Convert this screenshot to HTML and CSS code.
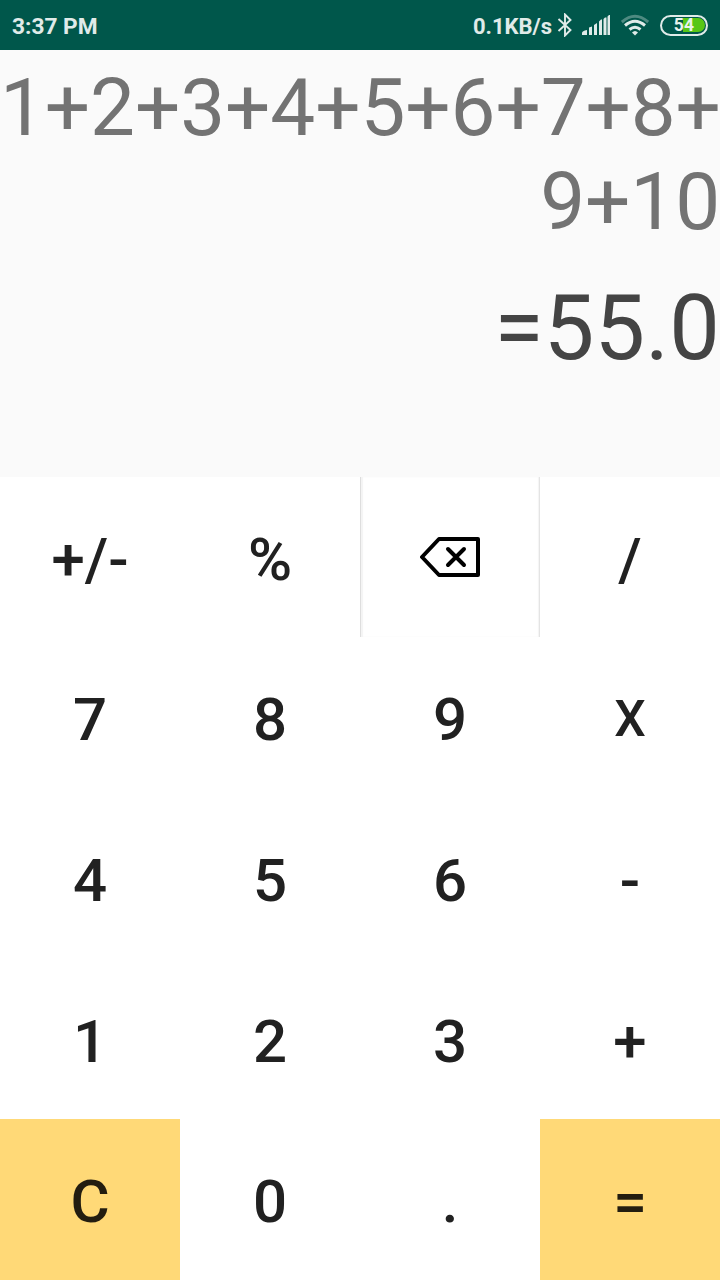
FILE: index.html
```html
<!DOCTYPE html>
<html lang="en">
<head>
<meta charset="utf-8">
<title>Calculator</title>
<link rel="stylesheet" href="styles.css">
</head>
<body>
<header class="status">
  <span class="time">3:37 PM</span>
  <div class="indicators">
    <span class="speed">0.1KB/s</span>
    <svg class="bluetooth" width="16" height="24" viewBox="0 0 16 24"><path d="M1.5 6 13.5 17 8 22.5V1.500L13.500 7 1.500 18" fill="none" stroke="#e0ebe9" stroke-width="1.9"/></svg>
    <svg class="signal" width="28" height="20" viewBox="0 0 28 20" fill="#e0ebe9"><path d="M0 20v-2q0-2 5-3v5zM7 12.500l3-1V20H7zM12 10l3-2v12h-3zM17 6.500l2-2h1V20h-3zM21.500 4l1.500-1.500h1.500V20h-3zM25.500 1.500 27 0h1v20h-2.500z"/></svg>
    <svg class="wifi" width="28" height="22" viewBox="0 0 28 22"><g fill="none" stroke="#e0ebe9" stroke-width="3"><path d="M.8 8Q14-3.500 27.200 8" opacity=".35"/><path d="M4 11.500Q14 3 24 11.500"/><path d="M8.500 15.500Q14 11 19.500 15.500"/></g><path d="M11 18.500q3-3 6 0l-3 3z" fill="#e0ebe9"/></svg>
    <span class="battery"><span class="level">54</span></span>
  </div>
</header>
<section class="display">
  <div class="expression">1+2+3+4+5+6+7+8+<br>9+10</div>
  <div class="result">=55.0</div>
</section>
<main class="keys">
  <button>+/-</button><button>%</button>
  <button class="erase"><svg width="60" height="40" viewBox="0 0 60 40" fill="none" stroke="#000" stroke-width="4" stroke-linejoin="round" stroke-linecap="round"><path d="M19 2H58V38H19L2 20Z"/><path d="M28 12 44 28M44 12 28 28"/></svg></button>
  <button>/</button>
  <button>7</button><button>8</button><button>9</button><button class="times">X</button>
  <button>4</button><button>5</button><button>6</button><button>-</button>
  <button>1</button><button>2</button><button>3</button><button>+</button>
  <button class="accent">C</button><button class="bottom">0</button><button class="bottom">.</button><button class="accent">=</button>
</main>
</body>
</html>
```
FILE: styles.css
```css
* { box-sizing: border-box; }
body { margin: 0; width: 720px; height: 1280px; display: flex; flex-direction: column; font-family: Roboto, sans-serif; background: #fff; overflow: hidden; }
.status { height: 50px; flex: none; display: flex; align-items: center; justify-content: space-between; padding: 0 12px; background: #00574b; color: #e0ebe9; font-size: 22.7px; font-weight: 700; }
.time { padding-top: 2px; }
.speed { font-size: 22px; padding-top: 2px; }
.indicators { display: flex; align-items: center; }
.bluetooth { margin-left: 5px; }
.signal { margin-left: 9px; }
.wifi { margin-left: 11px; }
.battery { width: 48px; height: 21px; margin-left: 11px; border: 2px solid #e0ebe9; border-radius: 11px; padding: 1.5px; }
.level { display: block; height: 14px; border-radius: 7px; background: linear-gradient(90deg, #00574b 46%, #57c616 46%); color: #e9f3ed; font-size: 17.5px; line-height: 15px; letter-spacing: .3px; text-align: center; }
.display { height: 427px; flex: none; background: #fafafa; text-align: right; padding-top: 11px; }
.expression { font-size: 80px; line-height: 94px; letter-spacing: -.12px; color: #737373; white-space: nowrap; }
.result { font-size: 90px; line-height: 106px; margin-top: 27px; letter-spacing: .2px; color: #444; }
.keys { flex: 1; display: grid; grid-template-columns: repeat(4, 180px); grid-template-rows: 160px repeat(4, 1fr); }
button { border: 0; margin: 0; padding: 5px 0 0; background: #fff; color: #212121; font: 500 60px Roboto, sans-serif; }
.times { font-size: 50px; padding-top: 3px; }
.erase { display: flex; align-items: center; justify-content: center; padding: 0; border-left: 1px solid #dedede; border-right: 1px solid #e4e4e4; box-shadow: inset 2px 0 1px #f4f4f4, inset -1px 0 1px #f4f4f4; }
.accent, .bottom { padding-top: 4px; }
.accent { background: #ffd977; color: #231d10; }
```
